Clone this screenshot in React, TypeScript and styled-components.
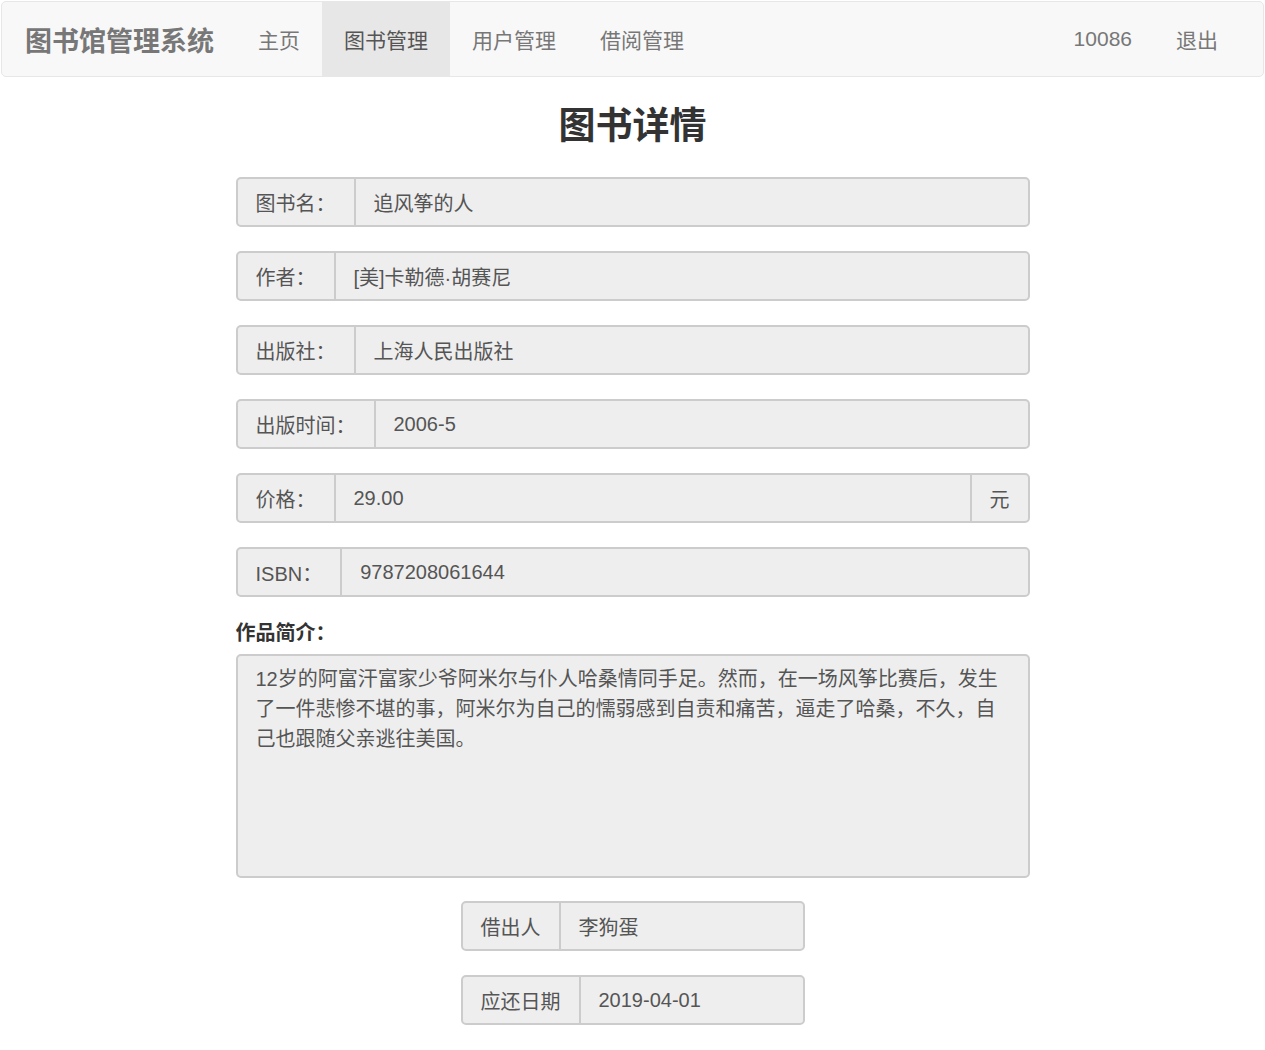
import React from "react";
import styled, { createGlobalStyle } from "styled-components";

const Global = createGlobalStyle`
  body { margin: 0; background: #fff; font-family: "Liberation Sans", Arial, "Noto Sans CJK SC", sans-serif; color: #333; }
`;

const Nav = styled.nav`
  margin: 1px 1px 0 1px;
  height: 74px;
  background: #f8f8f8;
  border: 1px solid #e7e7e7;
  border-radius: 5px;
  display: flex;
  align-items: stretch;
`;
const Brand = styled.div`
  display: flex; align-items: center;
  padding: 0 22px 0 23px;
  font-size: 27px; font-weight: bold; color: #777;
`;
const NavItem = styled.a<{ $active?: boolean }>`
  display: flex; align-items: center;
  padding: 0 22px;
  font-size: 21px; color: ${(p) => (p.$active ? "#555" : "#777")};
  background: ${(p) => (p.$active ? "#e7e7e7" : "transparent")};
  text-decoration: none;
`;
const Spacer = styled.div` flex: 1; `;

const Main = styled.main`
  width: 794px; margin: 0 auto;
  display: flex; flex-direction: column;
`;
const Title = styled.h1`
  margin: 26px 0 26px; text-align: center; font-size: 37px; font-weight: bold; color: #333; line-height: 48px;
`;
const Group = styled.div<{ $width?: number }>`
  display: flex; height: 50px;
  width: ${(p) => (p.$width ? p.$width + "px" : "100%")};
  align-self: center;
  border: 2px solid #ccc; border-radius: 5px;
  background: #eee; box-sizing: border-box;
  margin-bottom: 24px;
  font-size: 20px; color: #555;
`;
const Addon = styled.span<{ $right?: boolean }>`
  display: flex; align-items: center; white-space: nowrap;
  padding: 0 ${(p) => (p.$right ? "18px" : "18px")};
  ${(p) => (p.$right ? "border-left: 2px solid #ccc;" : "border-right: 2px solid #ccc;")}
`;
const Value = styled.span`
  flex: 1; display: flex; align-items: center; padding: 0 18px;
`;
const Label = styled.div`
  font-size: 20px; font-weight: bold; color: #333; margin: 0 0 9px; line-height: 24px;
`;
const Area = styled.div`
  height: 224px; box-sizing: border-box;
  border: 2px solid #ccc; border-radius: 5px; background: #eee;
  padding: 8px 18px; font-size: 20px; line-height: 30px; color: #555;
  margin-bottom: 23px;
`;

const rows: [string, string][] = [
  ["图书名：", "追风筝的人"],
  ["作者：", "[美]卡勒德·胡赛尼"],
  ["出版社：", "上海人民出版社"],
  ["出版时间：", "2006-5"],
];

export default function App() {
  return (
    <>
      <Global />
      <Nav>
        <Brand>图书馆管理系统</Brand>
        <NavItem>主页</NavItem>
        <NavItem $active>图书管理</NavItem>
        <NavItem>用户管理</NavItem>
        <NavItem>借阅管理</NavItem>
        <Spacer />
        <NavItem>10086</NavItem>
        <NavItem style={{ paddingRight: 45 }}>退出</NavItem>
      </Nav>
      <Main>
        <Title>图书详情</Title>
        {rows.map(([k, v]) => (
          <Group key={k}><Addon>{k}</Addon><Value>{v}</Value></Group>
        ))}
        <Group><Addon>价格：</Addon><Value>29.00</Value><Addon $right>元</Addon></Group>
        <Group><Addon>ISBN：</Addon><Value>9787208061644</Value></Group>
        <Label>作品简介：</Label>
        <Area>12岁的阿富汗富家少爷阿米尔与仆人哈桑情同手足。然而，在一场风筝比赛后，发生了一件悲惨不堪的事，阿米尔为自己的懦弱感到自责和痛苦，逼走了哈桑，不久，自己也跟随父亲逃往美国。</Area>
        <Group $width={344}><Addon>借出人</Addon><Value>李狗蛋</Value></Group>
        <Group $width={344}><Addon>应还日期</Addon><Value>2019-04-01</Value></Group>
      </Main>
    </>
  );
}
